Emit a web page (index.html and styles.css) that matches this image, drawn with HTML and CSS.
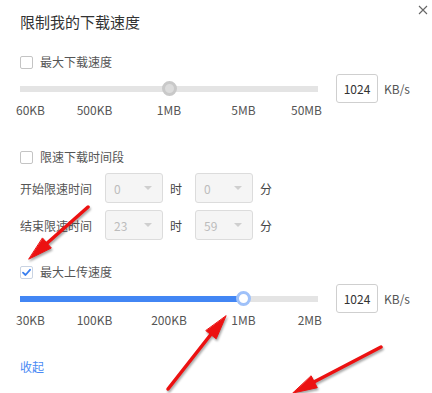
FILE: index.html
```html
<!DOCTYPE html>
<html lang="zh-CN">
<head>
  <meta charset="UTF-8">
  <title>限制我的下载速度</title>
  <link rel="stylesheet" href="styles.css">
</head>
<body>
  <div class="dialog">
    <span class="close">
      <svg width="10" height="10" viewBox="0 0 10 10"><path d="M1 1L9 9M9 1L1 9" stroke="#666" stroke-width="1.1" fill="none"/></svg>
    </span>
    <h1 class="title">限制我的下载速度</h1>

    <label class="check-row first-check">
      <span class="checkbox"></span>
      <span>最大下载速度</span>
    </label>
    <div class="speed-row">
      <div class="slider">
        <div class="track">
          <div class="bar"></div>
          <span class="thumb" style="left: 50%"></span>
        </div>
        <div class="scale">
          <span class="mark start" style="left: 0%">60KB</span>
          <span class="mark" style="left: 25%">500KB</span>
          <span class="mark" style="left: 50%">1MB</span>
          <span class="mark" style="left: 75%">5MB</span>
          <span class="mark end" style="left: 100%">50MB</span>
        </div>
      </div>
      <div class="num-box">1024</div>
      <span class="unit">KB/s</span>
    </div>

    <label class="check-row section">
      <span class="checkbox"></span>
      <span>限速下载时间段</span>
    </label>
    <div class="time-row">
      <span class="time-label">开始限速时间</span>
      <div class="select"><span>0</span><i class="caret"></i></div>
      <span class="time-unit">时</span>
      <div class="select"><span>0</span><i class="caret"></i></div>
      <span class="time-unit">分</span>
    </div>
    <div class="time-row second">
      <span class="time-label">结束限速时间</span>
      <div class="select"><span>23</span><i class="caret"></i></div>
      <span class="time-unit">时</span>
      <div class="select"><span>59</span><i class="caret"></i></div>
      <span class="time-unit">分</span>
    </div>

    <label class="check-row upload">
      <span class="checkbox checked">
        <svg width="11" height="11" viewBox="0 0 11 11"><path d="M2 5.6L4.5 8L9 2.8" stroke="#3a7ff0" stroke-width="1.8" fill="none" stroke-linecap="round" stroke-linejoin="round"/></svg>
      </span>
      <span>最大上传速度</span>
    </label>
    <div class="speed-row">
      <div class="slider">
        <div class="track">
          <div class="bar"></div>
          <div class="fill" style="width: 75%"></div>
          <span class="thumb active" style="left: 75%"></span>
        </div>
        <div class="scale">
          <span class="mark start" style="left: 0%">30KB</span>
          <span class="mark" style="left: 25%">100KB</span>
          <span class="mark" style="left: 50%">200KB</span>
          <span class="mark" style="left: 75%">1MB</span>
          <span class="mark end" style="left: 100%">2MB</span>
        </div>
      </div>
      <div class="num-box">1024</div>
      <span class="unit">KB/s</span>
    </div>

    <a class="collapse" href="#">收起</a>
  </div>

  <!-- annotation arrows drawn over the screenshot -->
  <svg class="arrows" width="432" height="393" viewBox="0 0 432 393">
    <g stroke="#ec1111" stroke-width="3.5" stroke-linecap="round" fill="#ec1111">
      <line x1="88" y1="207" x2="45" y2="245"/>
      <polygon points="29,259 51.3,248 42.7,238.2" stroke-width="1" stroke-linejoin="round"/>
      <line x1="168" y1="389" x2="212" y2="333"/>
      <polygon points="226,316 216.2,338.8 206,330.8" stroke-width="1" stroke-linejoin="round"/>
      <line x1="381" y1="347" x2="312" y2="383"/>
      <polygon points="293,393 317.3,387.7 311.3,376.1" stroke-width="1" stroke-linejoin="round"/>
    </g>
  </svg>
</body>
</html>
```

FILE: styles.css
```css
body {
  margin: 0;
  background: #fff;
  font-family: "Noto Sans CJK SC", "Noto Sans", sans-serif;
  font-size: 12px;
  color: #555;
}

.dialog {
  position: relative;
  width: 432px;
  height: 393px;
  padding: 12px 20px 0;
  box-sizing: border-box;
  overflow: hidden;
}

.close {
  position: absolute;
  top: 1px;
  right: 4px;
}

.title {
  margin: 0;
  font-size: 15px;
  line-height: 20px;
  font-weight: normal;
  color: #333;
}

.check-row {
  display: flex;
  align-items: center;
  gap: 7px;
  height: 16px;
  line-height: 16px;
  color: #555;
}

.first-check { margin-top: 22px; }
.section { margin-top: 32px; }
.upload { margin-top: 24px; }

.checkbox {
  width: 13px;
  height: 13px;
  border: 1px solid #c4c4c4;
  border-radius: 2px;
  box-sizing: border-box;
  display: flex;
  align-items: center;
  justify-content: center;
  background: #fff;
}

.checkbox.checked {
  border-color: #c9d3e2;
}

.speed-row {
  display: flex;
  align-items: flex-start;
  margin-top: 4px;
}

.slider {
  width: 298px;
}

.track {
  position: relative;
  height: 29px;
}

.bar, .fill {
  position: absolute;
  left: 0;
  top: 12px;
  height: 6px;
  background: #e4e4e4;
}

.bar { right: 0; }

.fill { background: #4286f4; }

.thumb {
  position: absolute;
  top: 7px;
  width: 15px;
  height: 15px;
  margin-left: -7.5px;
  border-radius: 50%;
  border: 3px solid #c9c9c9;
  background: #dcdcdc;
  box-sizing: border-box;
}

.thumb.active {
  border-color: #9fc1f9;
  background: #fff;
}

.scale {
  position: relative;
  height: 14px;
  line-height: 14px;
}

.mark {
  position: absolute;
  top: 0;
  transform: translateX(-50%);
  white-space: nowrap;
}

.mark.start { transform: translateX(-4px); }
.mark.end { transform: translateX(calc(-100% + 4px)); }

.num-box {
  margin-left: 18px;
  width: 42px;
  height: 29px;
  line-height: 27px;
  border: 1px solid #cfcfcf;
  border-radius: 3px;
  box-sizing: border-box;
  text-align: center;
  color: #333;
}

.unit {
  margin-left: 6px;
  line-height: 29px;
  color: #555;
}

.time-row {
  display: flex;
  align-items: center;
  margin-top: 8px;
  height: 30px;
}

.time-row.second { margin-top: 7px; }

.time-label {
  width: 85px;
  color: #555;
}

.select {
  width: 58px;
  height: 30px;
  border: 1px solid #dcdcdc;
  border-radius: 3px;
  background: #f5f5f5;
  box-sizing: border-box;
  display: flex;
  align-items: center;
  justify-content: space-between;
  padding: 0 10px 0 8px;
  color: #bcbcbc;
}

.caret {
  width: 0;
  height: 0;
  border-left: 4px solid transparent;
  border-right: 4px solid transparent;
  border-top: 4px solid #cfcfcf;
}

.time-unit {
  margin: 0 13px 0 7px;
  color: #444;
}

.collapse {
  display: inline-block;
  margin-top: 32px;
  line-height: 16px;
  color: #4a8af4;
  text-decoration: none;
}

.arrows {
  position: absolute;
  left: 0;
  top: 0;
  pointer-events: none;
  filter: drop-shadow(1px 2px 1px rgba(0, 0, 0, 0.35));
}
```
